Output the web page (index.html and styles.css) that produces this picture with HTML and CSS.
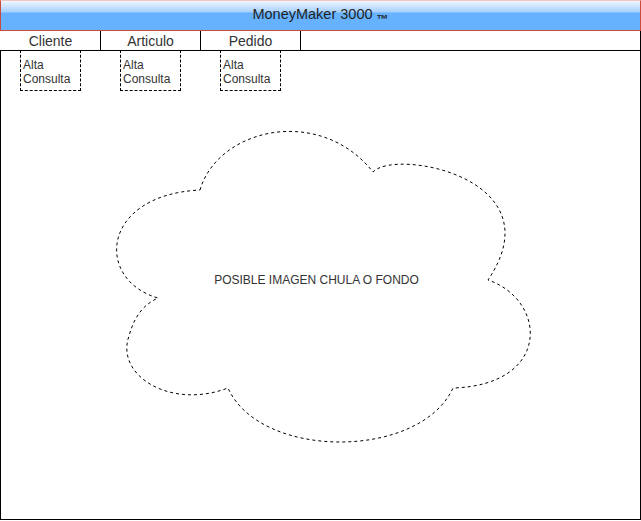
FILE: index.html
```html
<!DOCTYPE html>
<html lang="es">
<head>
<meta charset="utf-8">
<title>MoneyMaker 3000</title>
<link rel="stylesheet" href="styles.css">
</head>
<body>
<div class="app">
  <header class="titlebar">
    <span class="title">MoneyMaker 3000 <span class="tm">™</span></span>
  </header>
  <nav class="tabs">
    <div class="tab">Cliente</div>
    <div class="tab">Articulo</div>
    <div class="tab">Pedido</div>
  </nav>
  <main class="content">
    <div class="menus">
      <div class="submenu"><div>Alta</div><div>Consulta</div></div>
      <div class="submenu"><div>Alta</div><div>Consulta</div></div>
      <div class="submenu"><div>Alta</div><div>Consulta</div></div>
    </div>
    <div class="cloud">
      <svg class="cloud-shape" width="440" height="330" viewBox="100 120 440 330">
        <path d="M200,190 C218,128 320,105 373,172 C395,148 557,178 488,280 C547,300 552,385 453,388 C420,460 260,460 228,388 C170,410 115,375 129,336 C135,314 145,304 158,298 C95,280 100,195 200,190 Z" fill="none" stroke="#000" stroke-width="1" stroke-dasharray="3 3"/>
      </svg>
      <div class="cloud-text">POSIBLE IMAGEN CHULA O FONDO</div>
    </div>
  </main>
</div>
</body>
</html>
```
FILE: styles.css
```css
* { box-sizing: border-box; }
html, body { margin: 0; padding: 0; background: #fff; }
body { font-family: "Liberation Sans", Arial, sans-serif; color: #333; }

.app { width: 641px; height: 521px; }

.titlebar {
  height: 31px;
  border: 1px solid #cc4a3a;
  border-top-color: #f0c6c2;
  background: linear-gradient(to bottom, #eef5fe 0px, #c8e2fd 6px, #a6d0fd 11px, #66b2ff 12px, #66b2ff 100%);
  display: flex;
  align-items: center;
  justify-content: center;
}
.title { font-size: 14.5px; color: #1f1f1f; padding-top: 1px; }
.tm { font-size: 12px; font-weight: bold; vertical-align: -4px; }

.tabs {
  display: flex;
  height: 20px;
  padding-left: 1px;
  border-bottom: 1px solid #000;
  border-right: 1px solid #000;
}
.tab {
  width: 100px;
  border-right: 1px solid #000;
  padding-top: 1px;
  font-size: 14px;
  line-height: 18px;
  text-align: center;
  color: #333;
}

.content {
  height: 470px;
  border: 1px solid #000;
  border-top: none;
}

.menus {
  display: flex;
  gap: 39px;
  margin-top: -1px;
  margin-left: 19px;
}
.submenu {
  width: 61px;
  height: 41px;
  border: 1px dashed #000;
  padding: 7px 0 0 2px;
  font-size: 12px;
  line-height: 14px;
  color: #333;
}

.cloud {
  display: grid;
  width: 440px;
  height: 330px;
  margin-top: 29px;
  margin-left: 99px;
}
.cloud-shape, .cloud-text { grid-area: 1 / 1; }
.cloud-shape { display: block; }
.cloud-text {
  align-self: start;
  justify-self: start;
  width: 433px;
  margin-top: 153px;
  font-size: 12px;
  line-height: 14px;
  text-align: center;
  color: #333;
}
```
